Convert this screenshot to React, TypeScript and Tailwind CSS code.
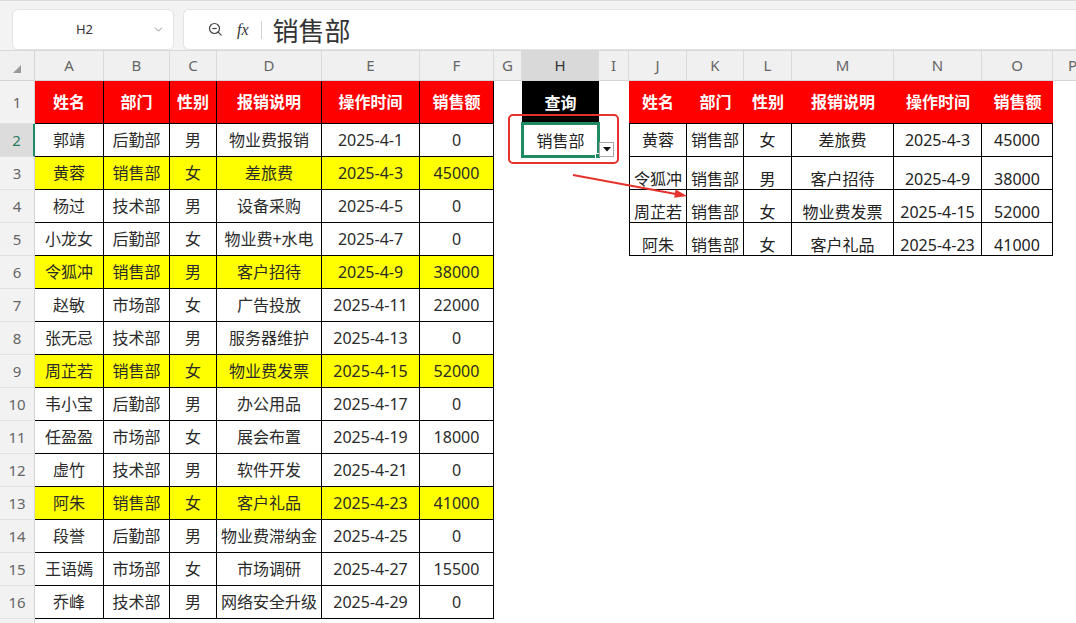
import React from 'react';
import { ChevronDown } from 'lucide-react';

const COLS = ['A', 'B', 'C', 'D', 'E', 'F', 'G', 'H', 'I', 'J', 'K', 'L', 'M', 'N', 'O', 'P'];
const WIDTHS = [
  'w-[69px]', 'w-[66px]', 'w-[47px]', 'w-[105px]', 'w-[98px]', 'w-[74px]',
  'w-[28px]', 'w-[77px]', 'w-[30px]',
  'w-[58px]', 'w-[57px]', 'w-[48px]', 'w-[102px]', 'w-[88px]', 'w-[71px]', 'w-[40px]',
];

const HEAD = ['姓名', '部门', '性别', '报销说明', '操作时间', '销售额'];

const DATA: string[][] = [
  ['郭靖', '后勤部', '男', '物业费报销', '2025-4-1', '0'],
  ['黄蓉', '销售部', '女', '差旅费', '2025-4-3', '45000'],
  ['杨过', '技术部', '男', '设备采购', '2025-4-5', '0'],
  ['小龙女', '后勤部', '女', '物业费+水电', '2025-4-7', '0'],
  ['令狐冲', '销售部', '男', '客户招待', '2025-4-9', '38000'],
  ['赵敏', '市场部', '女', '广告投放', '2025-4-11', '22000'],
  ['张无忌', '技术部', '男', '服务器维护', '2025-4-13', '0'],
  ['周芷若', '销售部', '女', '物业费发票', '2025-4-15', '52000'],
  ['韦小宝', '后勤部', '男', '办公用品', '2025-4-17', '0'],
  ['任盈盈', '市场部', '女', '展会布置', '2025-4-19', '18000'],
  ['虚竹', '技术部', '男', '软件开发', '2025-4-21', '0'],
  ['阿朱', '销售部', '女', '客户礼品', '2025-4-23', '41000'],
  ['段誉', '后勤部', '男', '物业费滞纳金', '2025-4-25', '0'],
  ['王语嫣', '市场部', '女', '市场调研', '2025-4-27', '15500'],
  ['乔峰', '技术部', '男', '网络安全升级', '2025-4-29', '0'],
];

const RESULT = DATA.filter((r) => r[1] === '销售部');

function cellContent(c: number, r: number): { text: string; cls: string } {
  const base = 'flex justify-center leading-none whitespace-nowrap overflow-hidden';
  if (c <= 5) {
    if (r === 1) {
      return { text: HEAD[c], cls: `${base} items-center bg-[#ff0000] text-white font-bold border-r border-b border-black` };
    }
    const row = DATA[r - 2];
    const yellow = row[1] === '销售部';
    return {
      text: row[c],
      cls: `${base} items-center text-[#2b2b2b] border-r border-b border-black ${yellow ? 'bg-[#ffff00]' : 'bg-white'}`,
    };
  }
  if (c === 7) {
    if (r === 1) return { text: '查询', cls: `${base} items-center bg-black text-white font-bold` };
    if (r === 2) return { text: '销售部', cls: `${base} items-center text-[#222]` };
    return { text: '', cls: base };
  }
  if (c >= 9 && c <= 14) {
    const k = c - 9;
    if (r === 1) {
      return { text: HEAD[k], cls: `${base} items-center bg-[#ff0000] text-white font-bold border-b border-black` };
    }
    if (r >= 2 && r <= 5) {
      const row = RESULT[r - 2];
      const align = r === 2 ? 'items-center' : 'items-end pb-[2px]';
      const left = c === 9 ? 'border-l border-black' : '';
      return { text: row[k], cls: `${base} ${align} text-[#222] border-r border-b border-black ${left}` };
    }
  }
  return { text: '', cls: base };
}

function RowHeader({ n, selected }: { n: number; selected: boolean }) {
  return (
    <div
      className={`flex-none w-[35px] flex items-center justify-center text-[15px] leading-none border-b border-[#e2e2e2] ${
        selected
          ? 'bg-[#dcdcdc] text-[#2a7a5c] border-r-2 border-r-[#1f8b63]'
          : 'bg-[#f2f2f2] text-[#666] border-r border-r-[#d4d4d4]'
      }`}
    >
      {n <= 16 ? n : ''}
    </div>
  );
}

function SheetRow({ r }: { r: number }) {
  const h = r === 1 ? 'h-[43px]' : 'h-[33px]';
  return (
    <div className={`flex flex-none ${h}`}>
      <RowHeader n={r} selected={r === 2} />
      {COLS.map((_, c) => {
        const { text, cls } = r <= 16 ? cellContent(c, r) : { text: '', cls: '' };
        return (
          <div key={c} className={`flex-none ${WIDTHS[c]} ${cls} text-[16px]`}>
            {text}
          </div>
        );
      })}
    </div>
  );
}

function ZoomIcon() {
  return (
    <svg width="15" height="15" viewBox="0 0 15 15" fill="none" stroke="#444" strokeWidth="1.2">
      <circle cx="6.5" cy="6.5" r="5" />
      <line x1="4.3" y1="6.5" x2="8.7" y2="6.5" />
      <line x1="10.2" y1="10.2" x2="13.2" y2="13.2" strokeLinecap="round" />
    </svg>
  );
}

export default function App() {
  return (
    <div className="relative w-[1076px] h-[623px] overflow-hidden bg-white font-['Noto_Sans','Noto_Sans_CJK_SC',sans-serif]">
      {/* Toolbar / formula bar */}
      <div className="flex items-start gap-[9px] h-[51px] pt-[8px] pl-[12px] bg-[#f3f3f3] border-t border-[#dcdcdc] border-b border-b-[#d8d8d8]">
        <div className="flex items-center w-[162px] h-[41px] bg-white rounded-[6px] border border-[#e3e3e3]">
          <div className="flex-1 text-center text-[13px] text-[#333] pl-[4px]">H2</div>
          <ChevronDown className="mr-[8px] text-[#777]" size={13} strokeWidth={1.5} />
        </div>
        <div className="flex items-center flex-1 h-[41px] bg-white rounded-l-[6px] border border-r-0 border-[#e3e3e3] pl-[24px]">
          <ZoomIcon />
          <span className="ml-[14px] text-[16px] italic text-[#333] font-['Liberation_Serif',serif]">fx</span>
          <span className="ml-[12px] w-px h-[18px] bg-[#d0d0d0]" />
          <span className="ml-[11px] text-[26px] leading-none text-[#333] font-['Noto_Sans_CJK_SC',sans-serif]">销售部</span>
        </div>
      </div>

      {/* Column headers */}
      <div className="flex h-[30px] bg-[#f0f0f0]">
        <div className="flex-none w-[35px] flex items-end justify-center pb-[6px] border-r border-[#d4d4d4] border-b border-b-[#d4d4d4]">
          <svg width="9" height="9" viewBox="0 0 9 9">
            <polygon points="8,0 8,8 0,8" fill="#9a9a9a" />
          </svg>
        </div>
        {COLS.map((l, c) => (
          <div
            key={l}
            className={`flex-none ${WIDTHS[c]} flex items-center justify-center text-[15px] leading-none border-r border-[#dadada] border-b border-b-[#d4d4d4] ${
              c === 7 ? 'bg-[#d9d9d9] text-[#333]' : 'text-[#666]'
            }`}
          >
            {l}
          </div>
        ))}
      </div>

      {/* Rows */}
      <div className="flex flex-col">
        {Array.from({ length: 17 }, (_, i) => (
          <SheetRow key={i} r={i + 1} />
        ))}
      </div>

      {/* Selection of H2 */}
      <div className="absolute left-[521px] top-[122px] w-[79px] h-[36px] border-[3px] border-[#1f8b63]" />
      <div className="absolute left-[595px] top-[153px] w-[6px] h-[6px] bg-[#1f8b63] border border-white" />
      {/* Dropdown button */}
      <div className="absolute left-[599px] top-[142px] w-[15px] h-[15px] bg-white border border-[#a8a8a8] flex items-center justify-center">
        <svg width="8" height="5" viewBox="0 0 8 5">
          <polygon points="0,0 8,0 4,4.5" fill="#111" />
        </svg>
      </div>
      {/* Red annotation box */}
      <div className="absolute left-[508px] top-[114px] w-[111px] h-[50px] border-[2.5px] border-[#e5322d] rounded-[5px]" />
      {/* Red arrow */}
      <svg className="absolute left-0 top-0 pointer-events-none" width="1076" height="623">
        <line x1="573" y1="175" x2="677" y2="194.2" stroke="#e5322d" strokeWidth="2" />
        <polygon points="687,196 675.6,189.6 674.2,197.8" fill="#e5322d" />
      </svg>
    </div>
  );
}
